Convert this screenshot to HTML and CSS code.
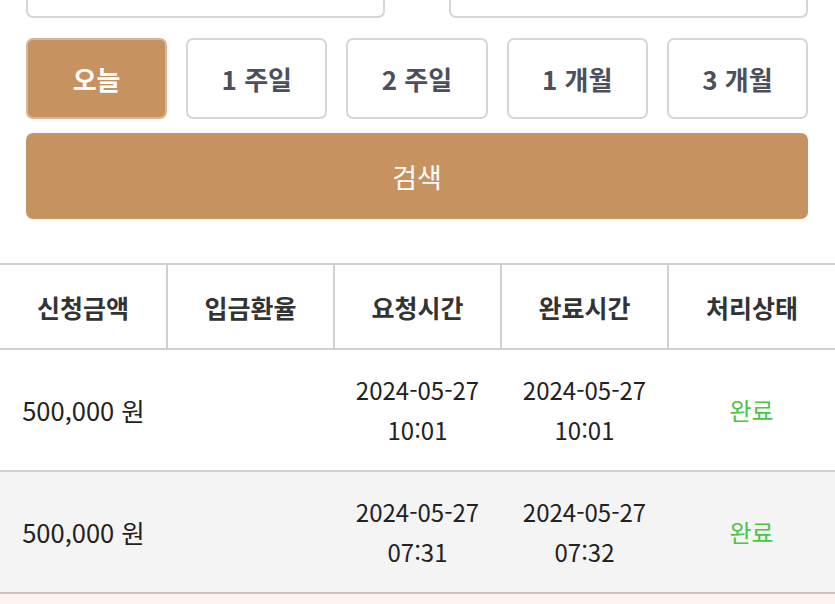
FILE: index.html
```html
<!DOCTYPE html>
<html lang="ko">
<head>
<meta charset="utf-8">
<link rel="stylesheet" href="styles.css">
</head>
<body>
<div class="page">
  <div class="form">
    <div class="dates">
      <div class="input"></div>
      <div class="input"></div>
    </div>
    <div class="periods">
      <button class="period active">오늘</button>
      <button class="period">1 주일</button>
      <button class="period">2 주일</button>
      <button class="period">1 개월</button>
      <button class="period">3 개월</button>
    </div>
    <button class="search">검색</button>
  </div>
  <table class="list">
    <thead>
      <tr>
        <th>신청금액</th>
        <th>입금환율</th>
        <th>요청시간</th>
        <th>완료시간</th>
        <th>처리상태</th>
      </tr>
    </thead>
    <tbody>
      <tr>
        <td class="amount">500,000 원</td>
        <td></td>
        <td>2024-05-27<br>10:01</td>
        <td>2024-05-27<br>10:01</td>
        <td class="done">완료</td>
      </tr>
      <tr class="alt">
        <td class="amount">500,000 원</td>
        <td></td>
        <td>2024-05-27<br>07:31</td>
        <td>2024-05-27<br>07:32</td>
        <td class="done">완료</td>
      </tr>
      <tr class="pending">
        <td>&nbsp;</td><td></td><td></td><td></td><td></td>
      </tr>
    </tbody>
  </table>
</div>
</body>
</html>
```
FILE: styles.css
```css
html, body {
  margin: 0;
  padding: 0;
  background: #ffffff;
  overflow: hidden;
}
body {
  font-family: "Noto Sans CJK KR", "Noto Sans", sans-serif;
  color: #222;
}
.page {
  margin-top: -36px;
}
.form {
  padding: 0 27px 0 26px;
}
.dates {
  display: grid;
  grid-template-columns: 1fr 1fr;
  column-gap: 64px;
}
.input {
  height: 54px;
  border: 2px solid #d6d6d6;
  border-radius: 7px;
  box-sizing: border-box;
  background: #fff;
}
.periods {
  margin-top: 20px;
  display: grid;
  grid-template-columns: repeat(5, 1fr);
  column-gap: 19px;
}
.period {
  height: 81px;
  border: 2px solid #d6d6d6;
  border-radius: 7px;
  background: #fff;
  font-family: inherit;
  font-size: 26px;
  font-weight: 700;
  color: #4b505c;
  padding: 0;
}
.period.active {
  background: #c6925f;
  border-color: #d9b795;
  color: #fff;
}
.search {
  display: block;
  width: 100%;
  margin-top: 14px;
  height: 86px;
  border: none;
  border-radius: 7px;
  background: #c6925f;
  color: #fff;
  font-family: inherit;
  font-size: 27px;
  font-weight: 400;
  padding: 0;
}
.list {
  margin-top: 44px;
  width: 100%;
  border-collapse: collapse;
  table-layout: fixed;
}
.list th {
  height: 83px;
  border-top: 2px solid #d0d0d0;
  border-bottom: 2px solid #d0d0d0;
  border-left: 2px solid #d0d0d0;
  font-size: 25px;
  font-weight: 700;
  color: #333;
  padding: 0;
  text-align: center;
}
.list th:first-child {
  border-left: none;
}
.list td {
  height: 120px;
  padding: 0;
  text-align: center;
  font-size: 24px;
  line-height: 40px;
  color: #222;
  border-bottom: 2px solid #d0d0d0;
}
.list td.amount {
  font-size: 25.5px;
}
.list tr.alt td {
  background: #f4f4f4;
  border-bottom-color: #c9c2be;
}
.list tr.pending td {
  background: #fcf3ef;
  border-bottom: none;
}
.list td.done {
  color: #4cc443;
}
```
